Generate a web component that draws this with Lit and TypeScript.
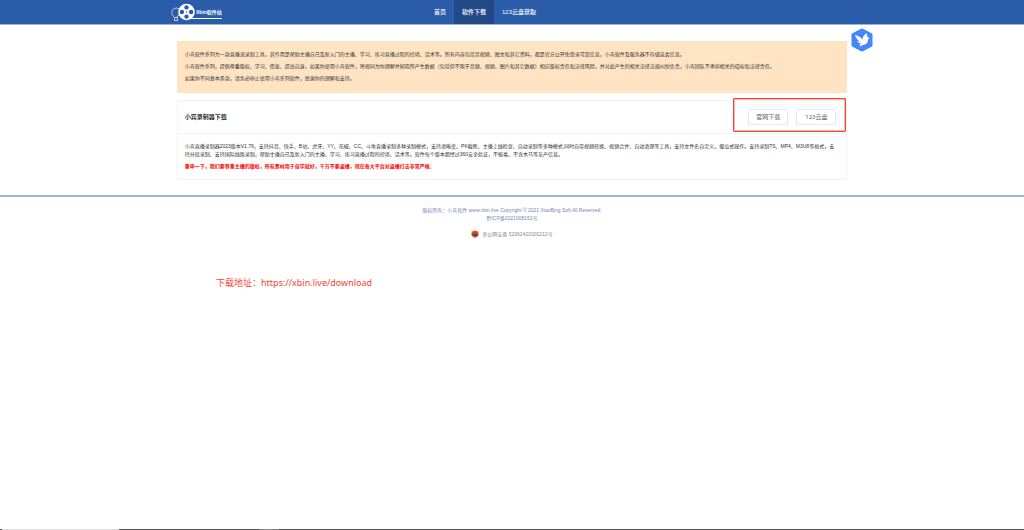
import { LitElement, html, css, svg } from "lit";
import { customElement } from "lit/decorators.js";

const reel = svg`
  <g fill="none" stroke="#fff">
    <path d="M5.500 8C2.500 8 .8 10.200 .8 12.500c0 2 1.300 3.200 2 4.500M5.500 8l3 1" stroke-width=".8" opacity=".8"/>
    <path d="M3.500 17.500h3v3h-3z" stroke-width=".9" opacity=".8"/>
    <path d="M6 17c.6-1.300 1.600-1.800 2.400-2.400" stroke-width=".8"/>
  </g>
  <circle cx="15.500" cy="12" r="8.300" fill="#fff"/>
  <g fill="#2a5caa">
    <circle cx="15.500" cy="7.400" r="2.200"/><circle cx="15.500" cy="16.600" r="2.200"/>
    <circle cx="10.900" cy="12" r="2.200"/><circle cx="20.100" cy="12" r="2.200"/>
    <circle cx="15.500" cy="12" r=".7"/>
  </g>
  <path d="M17 18.500h34" stroke="#fff" stroke-width="1"/>`;

@customElement("app-root")
export class AppRoot extends LitElement {
  static styles = css`
    :host {
      display: flex;
      flex-direction: column;
      min-height: 100vh;
      background: #fff;
      color: #333;
      font: 5px/8px "Liberation Sans", "Noto Sans CJK SC", sans-serif;
    }
    * { box-sizing: border-box; }
    p, h1 { margin: 0; }
    a { color: inherit; text-decoration: none; }
    .top {
      display: flex;
      height: 25px;
      background: #2a5caa;
      border-bottom: 1px solid #9db3d8;
      color: #fff;
      padding: 0 16.700%;
    }
    .brand {
      display: grid;
      min-width: 52px;
      flex: 0 1 255px;
      align-items: center;
      justify-content: start;
    }
    .brand svg, .brand span { grid-area: 1 / 1; }
    .brand svg { width: 54px; height: 24px; display: block; }
    .brand span { padding-left: 25px; font-weight: 700; }
    nav { display: flex; font-size: 6px; line-height: 25px; height: 24px; font-weight: 500; }
    nav a { padding: 0 8px; white-space: nowrap; }
    nav a.on { background: #224a88; }
    main {
      position: relative;
      width: 65.500%;
      margin: 16px auto 0;
    }
    .notice {
      background: #ffe4c4;
      padding: 7px 8px 9px;
      line-height: 12px;
    }
    .card {
      margin-top: 7px;
      border: 1px solid #f3f3f4;
      border-radius: 2px;
    }
    .head {
      display: flex;
      align-items: center;
      justify-content: space-between;
      height: 33px;
      padding: 0 10px 0 7px;
      border-bottom: 1px solid #f3f3f4;
    }
    h1 { font-size: 6px; line-height: 8px; }
    .actions { position: relative; display: flex; gap: 8px; }
    .mark {
      position: absolute;
      inset: -11px -10px -7px -15px;
      border: 1px solid #f44336;
      outline: 1px solid #f4433660;
      outline-offset: -2px;
      border-radius: 1px;
      pointer-events: none;
    }
    button {
      width: 40px;
      height: 16px;
      padding: 0;
      background: #fff;
      border: 1px solid #e6e8ee;
      border-radius: 2px;
      color: #606266;
      font: 6px/14px "Noto Sans", "Noto Sans CJK SC", sans-serif;
    }
    .text { padding: 8px 8px 9px 7px; }
    .warn { margin-top: 4px; color: #f00; font-weight: 700; }
    .bird {
      position: absolute;
      left: calc(100% + 4px);
      top: -13px;
      width: 22px;
      height: 24px;
    }
    footer {
      margin-top: 15px;
      padding-top: 9px;
      border-top: 2px solid #9db3de;
      text-align: center;
      color: #7388b8;
    }
    .police {
      display: flex;
      justify-content: center;
      align-items: center;
      gap: 3px;
      margin-top: 8px;
      color: #8a8a8a;
    }
    .police svg { width: 8px; height: 8px; }
    .address {
      padding: 39px 8px 0 21.100%;
      color: #f44336;
      font: 9px/12px "Noto Sans", "Noto Sans CJK SC", sans-serif;
    }
    .strip {
      display: flex;
      height: 1px;
      margin-top: auto;
      background: #555;
    }
    .strip i { flex: 0 0 11.400%; margin-left: 2px; background: #ddd; }
    .strip b { flex: 0 0 2%; margin-left: 13.700%; background: #888; }
  `;

  render() {
    return html`
      <header class="top">
        <a class="brand" href="#">
          <svg viewBox="0 0 54 24" aria-hidden="true">${reel}</svg>
          <span>Xbin软件站</span>
        </a>
        <nav>
          <a href="#">首页</a>
          <a class="on" href="#">软件下载</a>
          <a href="#">123云盘获取</a>
        </nav>
      </header>
      <main>
        <section class="notice">
          <p>小宾软件系列为一款直播流录制工具，其作用是帮助主播自己及新入门的主播、学习、练习直播过程的控场、话术等。所有内容包括音视频、图文和其它资料，都是官方公开免登录可见信息，小宾软件及服务器不存储这类信息。</p>
          <p>小宾软件系列，提倡尊重版权、学习、借鉴、提高自身。如果你使用小宾软件，将视同为你理解并知晓所产生数据（包括但不限于音频、视频、图片和其它数据）相应版权责任和法律风险，并对此产生的相关法律法规纠纷负责，小宾团队不承担相关的侵权和法律责任。</p>
          <p>如果你不同意本条款，请务必停止使用小宾系列软件，感谢你的理解和支持。</p>
        </section>
        <section class="card">
          <div class="head">
            <h1>小宾录制器下载</h1>
            <div class="actions">
              <button type="button">官网下载</button>
              <button type="button">123云盘</button>
              <span class="mark"></span>
            </div>
          </div>
          <div class="text">
            <p>小宾直播录制器2023版本V1.79，支持抖音、快手、B站、虎牙、YY、花椒、CC、斗鱼直播录制多种录制模式，支持清晰度、PK截断、主播上线检查、自动录制等多种模式,同时自带视频转换、视频合并、自动清理等工具，支持文件名自定义，傻瓜式操作。支持录制TS、MP4、M3U8等格式，支持分段录制、支持国际线路录制，帮助主播自己及新入门的主播、学习、练习直播过程的控场、话术等。软件每个版本都经过360安全验证，不报毒、不含木马等灰产信息。</p>
            <p class="warn">重申一下，我们要尊重主播的版权，所有素材用于自学就好，千万不要盗播，现在各大平台对盗播打击非常严格。</p>
          </div>
        </section>
        <svg class="bird" viewBox="0 0 22 24" aria-hidden="true">
          <path d="M11 1.500 20.500 6.500v11L11 22.500 1.500 17.500v-11z" fill="#4388fb" stroke="#4388fb" stroke-width="2" stroke-linejoin="round"/>
          <path d="M4 7.300c2.200.3 4.200 1 5.800 2.500.8.700 1.300 1.400 1.700 2 .1-3 1.700-5.300 4.700-6.700-.5 1.500-.2 2.400.2 3.500.4 1 1.200 1.200 2.400 1.500-1.200.4-1.600 1-1.800 2.200-.4 3-2.300 4.500-4.900 4.700-1.300.1-2.200 1-3 1.800.1-1.200-.2-2-.9-2.700 1 .1 1.700-.1 2.200-.5-2.100-.1-3.400-.9-4-2.300.9.200 1.700.2 2.400-.1C6.500 12 4.900 10.200 4 7.300z" fill="#fff"/>
        </svg>
      </main>
      <footer>
        <p>版权所有：小宾软件 www.xbin.live Copyright © 2021 XiaoBing Soft All Reserved.</p>
        <p><a href="#">黔ICP备2022008151号</a></p>
        <a class="police" href="#">
          <svg viewBox="0 0 8 8" aria-hidden="true">
            <path d="M.6 1.200C2 1.200 3 .8 4 .1c1 .7 2 1.100 3.400 1.100L7.800 4c0 2-1.800 3.200-3.800 3.900C2 7.200.2 6 .2 4z" fill="#e8a84a"/>
            <path d="M1.300 1.800 4 .9l2.700.9v2.400H1.300z" fill="#e0342c"/>
            <path d="M.6 4.200h6.800v1L4 6 .6 5.200z" fill="#2b2f4c"/>
            <path d="M1.600 6 4 6.600 6.400 6l-.7.900L4 7.500l-1.700-.6z" fill="#d9302c"/>
          </svg>
          <span>贵公网安备 52062402000212号</span>
        </a>
      </footer>
      <p class="address">下载地址：https://xbin.live/download</p>
      <div class="strip"><i></i><b></b></div>
    `;
  }
}
